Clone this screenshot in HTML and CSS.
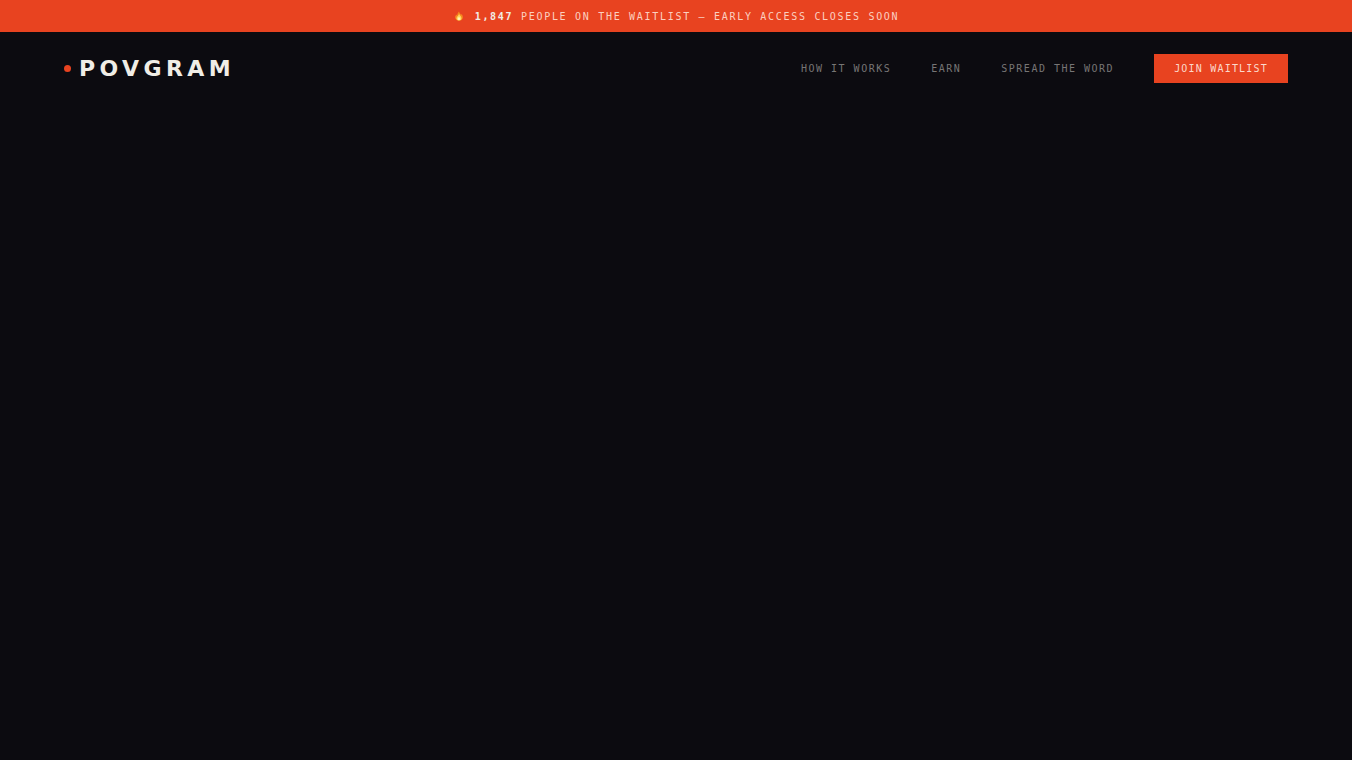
FILE: index.html
```html
<!DOCTYPE html>
<html lang="en">
<head>
    <meta charset="UTF-8">
    <meta name="viewport" content="width=device-width, initial-scale=1.0">
    <title>POVGRAM — Join the waitlist</title>
    <link rel="stylesheet" href="styles.css">
</head>
<body>
    <!-- Announcement bar -->
    <div class="ticker">
        <svg class="flame" viewBox="0 0 12 12" aria-hidden="true">
            <path fill="#f58a1f" d="M6 0.5C6.6 2.6 8 3.4 8.4 4.8C8.8 4.4 8.9 4 8.9 3.6C10.2 4.9 10.8 6.4 10.6 8C10.3 10.3 8.4 11.7 6 11.7C3.5 11.7 1.6 10.2 1.4 7.9C1.3 6.4 1.9 5.2 2.9 4.2C3 5 3.3 5.5 3.8 5.8C3.8 3.7 4.6 1.9 6 0.5Z"/>
            <path fill="#ffd75e" d="M6.1 3.4C6.5 5.6 9.2 6.6 9 9C8.8 10.6 7.6 11.3 6 11.3C4.4 11.3 3.1 10.6 3 9C2.9 7 5.5 6 6.1 3.4Z"/>
            <path fill="#fff3b8" d="M6 7C6.4 8 7.6 8.5 7.5 9.6C7.4 10.5 6.8 11 6 11C5.2 11 4.6 10.5 4.5 9.6C4.4 8.6 5.6 8 6 7Z"/>
        </svg>
        <p><strong>1,847</strong> people on the waitlist — early access closes soon</p>
    </div>

    <nav class="nav">
        <a href="#" class="logo"><span class="logo-dot"></span>POVGRAM</a>
        <div class="nav-links">
            <a href="#how">How it works</a>
            <a href="#earn">Earn</a>
            <a href="#spread">Spread the word</a>
            <a href="#waitlist" class="nav-cta">Join waitlist</a>
        </div>
    </nav>

    <main class="hero"></main>
</body>
</html>
```
FILE: styles.css
```css
:root {
    --black: #0c0b10;
    --white: #f0ede6;
    --red: #e84320;
    --grey: #777575;
    --mono: "DejaVu Sans Mono", monospace;
}

* {
    box-sizing: border-box;
    margin: 0;
    padding: 0;
}

body {
    display: flex;
    flex-direction: column;
    min-height: 100vh;
    background: var(--black);
    color: var(--white);
    font-family: var(--mono);
    font-size: 10px;
    line-height: 13px;
}

a {
    color: inherit;
    text-decoration: none;
}

/* Announcement bar */
.ticker {
    display: flex;
    justify-content: center;
    align-items: center;
    gap: 10px;
    min-height: 32px;
    padding: 8px 20px;
    background: var(--red);
    color: #fbd0c0;
    letter-spacing: 0.17em;
    text-transform: uppercase;
}

.ticker strong {
    color: var(--white);
}

.flame {
    width: 12px;
    height: 10px;
}

/* Navigation */
.nav {
    display: flex;
    justify-content: space-between;
    align-items: center;
    padding: 22px 64px;
}

.logo {
    display: flex;
    align-items: center;
    gap: 8px;
    font-family: "DejaVu Sans", sans-serif;
    font-size: 22px;
    font-weight: 700;
    line-height: 24px;
    letter-spacing: 0.2em;
}

.logo-dot {
    width: 7px;
    height: 7px;
    border-radius: 50%;
    background: var(--red);
}

.nav-links {
    display: flex;
    align-items: center;
    gap: 40px;
    color: var(--grey);
    letter-spacing: 0.15em;
    text-transform: uppercase;
}

.nav-links .nav-cta {
    padding: 8px 20px;
    background: var(--red);
    color: #fbd9cc;
    letter-spacing: 0.12em;
}

.nav-cta:hover {
    background: #c93616;
}

.hero {
    flex: 1;
}
```
